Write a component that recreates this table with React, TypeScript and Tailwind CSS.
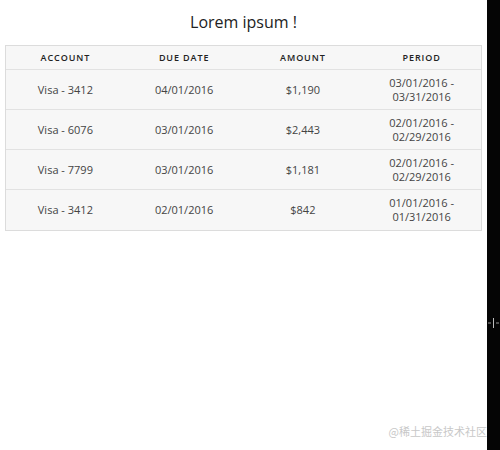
import React from "react";

const rows = [
  { account: "Visa - 3412", due: "04/01/2016", amount: "$1,190", p1: "03/01/2016 -", p2: "03/31/2016" },
  { account: "Visa - 6076", due: "03/01/2016", amount: "$2,443", p1: "02/01/2016 -", p2: "02/29/2016" },
  { account: "Visa - 7799", due: "03/01/2016", amount: "$1,181", p1: "02/01/2016 -", p2: "02/29/2016" },
  { account: "Visa - 3412", due: "02/01/2016", amount: "$842", p1: "01/01/2016 -", p2: "01/31/2016" },
];

export default function App() {
  return (
    <div className="flex h-[450px] w-[500px] bg-white" style={{ fontFamily: '"Open Sans", "Noto Sans", sans-serif' }}>
      <div className="relative flex-1">
        <h1 className="pt-[11px] text-center text-[16px] leading-[22px] text-[#222]">Lorem ipsum !</h1>
        <div className="mx-[5px] mt-[12px] border border-[#dcdcdc] bg-[#f7f7f7]">
          <div className="grid h-[24px] grid-cols-4 items-center border-b border-[#e2e2e2] text-center text-[9px] font-semibold tracking-[0.1em] text-[#222]">
            <div>ACCOUNT</div>
            <div>DUE DATE</div>
            <div>AMOUNT</div>
            <div>PERIOD</div>
          </div>
          {rows.map((r, i) => (
            <div
              key={i}
              className={`grid h-[40px] grid-cols-4 items-center text-center text-[11px] leading-[14px] text-[#444] ${i < rows.length - 1 ? "border-b border-[#e2e2e2]" : ""}`}
            >
              <div>{r.account}</div>
              <div>{r.due}</div>
              <div>{r.amount}</div>
              <div>
                <div>{r.p1}</div>
                <div>{r.p2}</div>
              </div>
            </div>
          ))}
        </div>
        <div
          className="absolute bottom-[12px] right-0 text-[11px] leading-[14px] text-[#c8c8c8]"
          style={{ fontFamily: '"Noto Sans CJK SC", sans-serif' }}
        >
          @稀土掘金技术社区
        </div>
      </div>
      <div className="relative w-[13px] bg-[#050505]">
        <svg className="absolute left-0 top-[317px]" width="13" height="12" viewBox="0 0 13 12">
          <line x1="6.5" y1="1" x2="6.5" y2="11" stroke="#bbb" strokeWidth="1" />
          <line x1="1" y1="6" x2="4" y2="6" stroke="#999" strokeWidth="1" />
          <line x1="9" y1="6" x2="12" y2="6" stroke="#999" strokeWidth="1" />
        </svg>
      </div>
    </div>
  );
}
